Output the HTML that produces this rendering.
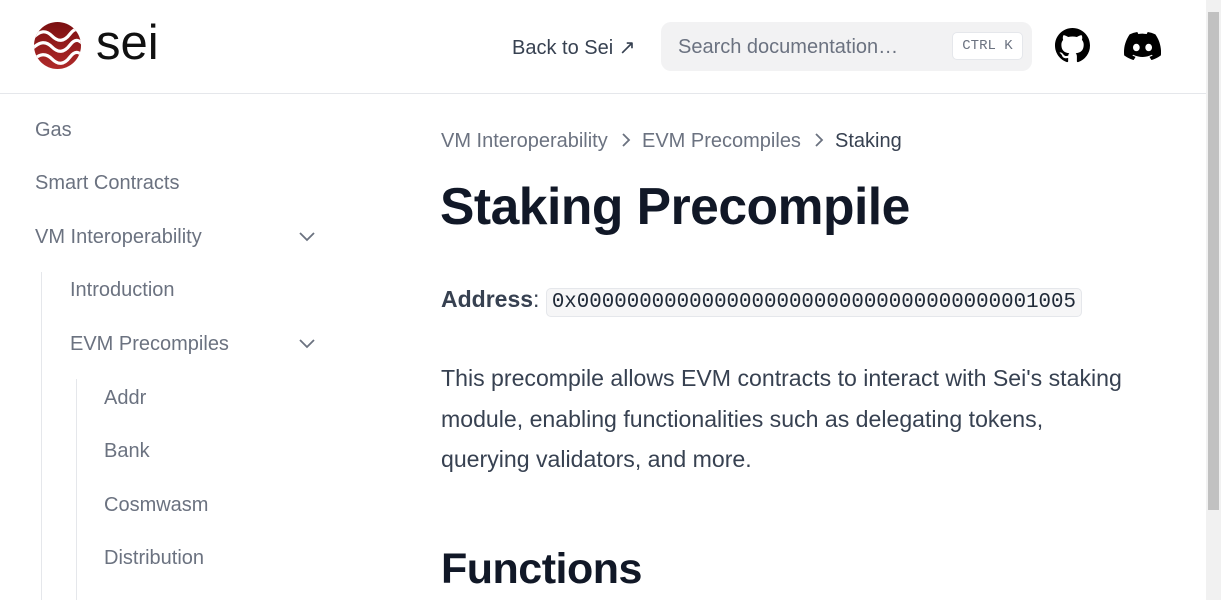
<!DOCTYPE html>
<html><head><meta charset="utf-8"><style>
*{margin:0;padding:0;box-sizing:border-box}
body{width:1221px;height:600px;overflow:hidden;background:#fff;font-family:"Liberation Sans",sans-serif;position:relative}
.hdr{position:absolute;left:0;top:0;width:1206px;height:94px;border-bottom:1px solid #e5e7eb}
.sb{position:absolute;right:0;top:0;width:15px;height:600px;background:#f1f1f1}
.sb div{position:absolute;left:2px;top:12px;width:11px;height:498px;background:#c1c1c1}
.nav{position:absolute;font-size:20px;color:#6b7280}
.t{position:absolute;white-space:nowrap}
</style></head><body>
<div class="hdr">
<svg style="position:absolute;left:34px;top:22px" width="47" height="47" viewBox="0 0 47 47">
<defs><clipPath id="c"><circle cx="23.5" cy="23.5" r="23.5"/></clipPath><linearGradient id="g" x1="0" y1="0" x2="0" y2="1"><stop offset="0" stop-color="#7a0f10"/><stop offset="1" stop-color="#b02a2a"/></linearGradient></defs>
<circle cx="23.5" cy="23.5" r="23.5" fill="url(#g)"/>
<g clip-path="url(#c)" fill="none" stroke="#fff" stroke-width="3.2">
<path d="M-2 17 C6 8 12 8 18 14 S30 20 36 12 S46 8 50 12"/>
<path d="M-2 27 C6 19 12 19 18 25 S30 31 36 23 S46 19 50 23"/>
<path d="M-2 39 C6 31 12 31 18 37 S30 43 36 35 S46 31 50 35"/>
</g></svg>
<div class="t" style="left:96px;top:15px;font-size:49px;color:#111">sei</div>
<div class="t" style="left:512px;top:35px;font-size:20px;color:#374151">Back to Sei ↗</div>
<div style="position:absolute;left:661px;top:22px;width:371px;height:49px;background:#f2f2f3;border-radius:10px">
<div class="t" style="left:17px;top:14px;font-size:20px;color:#6b7280">Search documentation…</div>
<div style="position:absolute;left:291px;top:10px;width:71px;height:28px;background:#fff;border:1px solid #e5e7eb;border-radius:5px;font-family:'Liberation Mono',monospace;font-size:14px;color:#6b7280;text-align:center;line-height:26px">CTRL K</div>
</div>
<svg style="position:absolute;left:1055px;top:28px" width="35" height="35" viewBox="0 0 16 16"><path fill="#000" d="M8 0C3.58 0 0 3.58 0 8c0 3.54 2.290 6.53 5.47 7.59.4.07.55-.17.55-.38 0-.19-.01-.82-.01-1.49-2.01.37-2.53-.49-2.69-.94-.09-.23-.48-.94-.82-1.130-.28-.15-.68-.52-.01-.53.63-.01 1.080.58 1.230.82.72 1.21 1.87.87 2.33.66.07-.52.28-.87.51-1.07-1.78-.2-3.64-.89-3.64-3.95 0-.87.31-1.59.82-2.15-.08-.2-.36-1.02.08-2.12 0 0 .67-.21 2.2.82.64-.18 1.32-.27 2-.27.68 0 1.36.09 2 .27 1.53-1.04 2.2-.82 2.2-.82.44 1.1.16 1.92.08 2.12.51.56.82 1.27.82 2.15 0 3.07-1.87 3.75-3.65 3.95.29.25.54.73.54 1.48 0 1.070-.01 1.93-.01 2.2 0 .21.15.46.55.38A8.013 8.013 0 0016 8c0-4.42-3.58-8-8-8z"/></svg>
<svg style="position:absolute;left:1124px;top:32px" width="37" height="28" viewBox="0 0 127 96"><path fill="#000" d="M107.7 8.07A105 105 0 0081.47 0a72 72 0 00-3.36 6.83 97.7 97.7 0 00-29.11 0A72 72 0 0045.64 0a105.9 105.9 0 00-26.25 8.09C2.79 32.65-1.71 56.6.54 80.21a105.7 105.7 0 0032.17 16.15 77.7 77.7 0 006.89-11.11 68.4 68.4 0 01-10.85-5.18c.91-.66 1.8-1.34 2.66-2a75.6 75.6 0 0064.32 0c.87.71 1.76 1.39 2.66 2a68.7 68.7 0 01-10.87 5.19 77 77 0 006.89 11.1 105.3 105.3 0 0032.19-16.14c2.64-27.38-4.51-51.11-18.9-72.15zM42.45 65.69C36.18 65.69 31 60 31 53s5-12.74 11.43-12.74S54 46 53.89 53s-5.05 12.69-11.44 12.69zm42.24 0C78.41 65.690 73.25 60 73.25 53s5-12.74 11.44-12.74S96.23 46 96.12 53s-5.04 12.69-11.43 12.69z"/></svg>
</div>
<div class="sb"><div></div></div>
<div class="nav">
<div class="t" style="left:35px;top:119px">Gas</div>
<div class="t" style="left:35px;top:172px">Smart Contracts</div>
<div class="t" style="left:35px;top:226px">VM Interoperability</div>
<div class="t" style="left:70px;top:279px">Introduction</div>
<div class="t" style="left:70px;top:333px">EVM Precompiles</div>
<div class="t" style="left:104px;top:387px">Addr</div>
<div class="t" style="left:104px;top:440px">Bank</div>
<div class="t" style="left:104px;top:494px">Cosmwasm</div>
<div class="t" style="left:104px;top:547px">Distribution</div>
</div>
<svg style="position:absolute;left:298px;top:229px" width="18" height="14" viewBox="0 0 18 14"><path d="M2 4l7 7 7-7" fill="none" stroke="#6b7280" stroke-width="1.8"/></svg>
<svg style="position:absolute;left:298px;top:336px" width="18" height="14" viewBox="0 0 18 14"><path d="M2 4l7 7 7-7" fill="none" stroke="#6b7280" stroke-width="1.8"/></svg>
<div style="position:absolute;left:41px;top:272px;width:1px;height:328px;background:#e5e7eb"></div>
<div style="position:absolute;left:76px;top:379px;width:1px;height:221px;background:#e5e7eb"></div>
<div class="t" style="left:441px;top:130px;font-size:20px;color:#6b7280">VM Interoperability</div>
<div class="t" style="left:642px;top:130px;font-size:20px;color:#6b7280">EVM Precompiles</div>
<div class="t" style="left:835px;top:130px;font-size:20px;color:#374151">Staking</div>
<svg style="position:absolute;left:620px;top:131px" width="12" height="18" viewBox="0 0 12 18"><path d="M3 3l6 6-6 6" fill="none" stroke="#6b7280" stroke-width="1.8"/></svg>
<svg style="position:absolute;left:813px;top:131px" width="12" height="18" viewBox="0 0 12 18"><path d="M3 3l6 6-6 6" fill="none" stroke="#6b7280" stroke-width="1.8"/></svg>
<div class="t" style="left:440px;top:176px;font-size:51.6px;font-weight:bold;color:#111827;letter-spacing:-0.5px">Staking Precompile</div>
<div class="t" style="left:441px;top:286px;font-size:23px;color:#374151"><b>Address</b>: <span style="font-family:'Liberation Mono',monospace;font-size:20.8px;background:#f6f6f7;border:1px solid #e5e7eb;border-radius:5px;padding:2px 5px;color:#1f2937">0x0000000000000000000000000000000000001005</span></div>
<div style="position:absolute;left:441px;top:358px;width:695px;font-size:23.1px;line-height:40.5px;color:#374151">This precompile allows EVM contracts to interact with Sei's staking module, enabling functionalities such as delegating tokens, querying validators, and more.</div>
<div class="t" style="left:441px;top:545px;font-size:43px;font-weight:bold;color:#111827;letter-spacing:-0.5px">Functions</div>
</body></html>
